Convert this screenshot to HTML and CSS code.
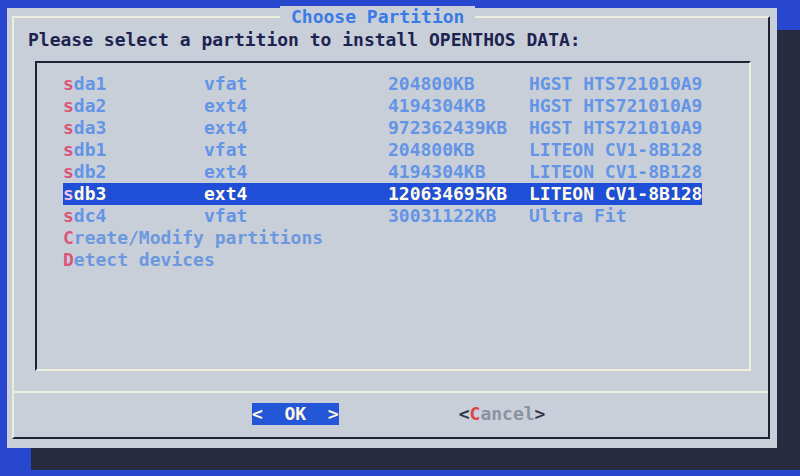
FILE: index.html
```html
<!DOCTYPE html>
<html>
<head>
<meta charset="utf-8">
<link rel="stylesheet" href="styles.css">
</head>
<body>
<div class="dialog">
  <div class="frame">
    <div class="title">Choose Partition</div>
    <div class="prompt">Please select a partition to install OPENTHOS DATA:</div>
    <div class="listbox">
      <div class="row"><span><b>s</b>da1</span><span>vfat</span><span>204800KB</span><span>HGST HTS721010A9</span></div>
      <div class="row"><span><b>s</b>da2</span><span>ext4</span><span>4194304KB</span><span>HGST HTS721010A9</span></div>
      <div class="row"><span><b>s</b>da3</span><span>ext4</span><span>972362439KB</span><span>HGST HTS721010A9</span></div>
      <div class="row"><span><b>s</b>db1</span><span>vfat</span><span>204800KB</span><span>LITEON CV1-8B128</span></div>
      <div class="row"><span><b>s</b>db2</span><span>ext4</span><span>4194304KB</span><span>LITEON CV1-8B128</span></div>
      <div class="row selected"><span><b>s</b>db3</span><span>ext4</span><span>120634695KB</span><span>LITEON CV1-8B128</span></div>
      <div class="row"><span><b>s</b>dc4</span><span>vfat</span><span>30031122KB</span><span>Ultra Fit</span></div>
      <div class="row"><span class="wide"><b>C</b>reate/Modify partitions</span></div>
      <div class="row"><span class="wide"><b>D</b>etect devices</span></div>
    </div>
    <div class="separator"></div>
    <div class="buttons">
      <div class="btn ok">&lt;  OK  &gt;</div>
      <div class="btn cancel"><span class="br">&lt;</span><b>C</b>ancel<span class="br">&gt;</span></div>
    </div>
  </div>
</div>
</body>
</html>
```
FILE: styles.css
```css
* { box-sizing: border-box; }
html, body { margin: 0; }
body {
  background: #2747cf;
  width: 800px;
  height: 476px;
  overflow: hidden;
  padding: 8px 0 0 7px;
  font-family: "DejaVu Sans Mono", "Liberation Mono", monospace;
  font-size: 18px;
  font-weight: bold;
  line-height: 22px;
}
.dialog {
  width: 770px;
  height: 440px;
  background: #c8cfd8;
  box-shadow: 24px 22px 0 #262b40;
  padding: 8px 7px 9px 5px;
}
.frame {
  position: relative;
  height: 100%;
  border-top: 2px solid #eeeedd;
  border-left: 2px solid #eeeedd;
  border-right: 2px solid #1e2235;
  border-bottom: 2px solid #1e2235;
}
.title {
  position: absolute;
  top: -12px;
  left: 266px;
  padding: 0 11px;
  background: #c8cfd8;
  color: #3a7ae6;
  white-space: pre;
}
.prompt {
  margin: 11px 0 0 14px;
  color: #1d2350;
  white-space: pre;
}
.listbox {
  margin: 10px 0 0 21px;
  width: 716px;
  height: 310px;
  border-top: 2px solid #1e2235;
  border-left: 2px solid #1e2235;
  border-right: 2px solid #eeeedd;
  border-bottom: 2px solid #eeeedd;
  padding: 10px 0 0 26px;
}
.row {
  display: grid;
  grid-template-columns: 141px 184px 141px max-content;
  width: max-content;
  color: #6494e6;
  white-space: pre;
}
.row b { color: #d9557a; font-weight: bold; }
.row .wide { grid-column: 1 / 5; }
.row.selected { background: #1f4fd6; color: #fffbe6; }
.row.selected b { color: #f3c3e0; }
.row .wide { color: #6d98e0; }
.separator {
  margin-top: 20px;
  border-top: 2px solid #eeeedd;
}
.buttons {
  display: flex;
  gap: 120px;
  margin-top: 10px;
  padding-left: 238px;
  height: 22px;
}
.btn { white-space: pre; }
.ok { background: #2456d8; color: #fff8e0; }
.cancel { color: #8a92a0; }
.cancel .br { color: #30354a; }
.cancel b { color: #e04040; font-weight: bold; }
```
